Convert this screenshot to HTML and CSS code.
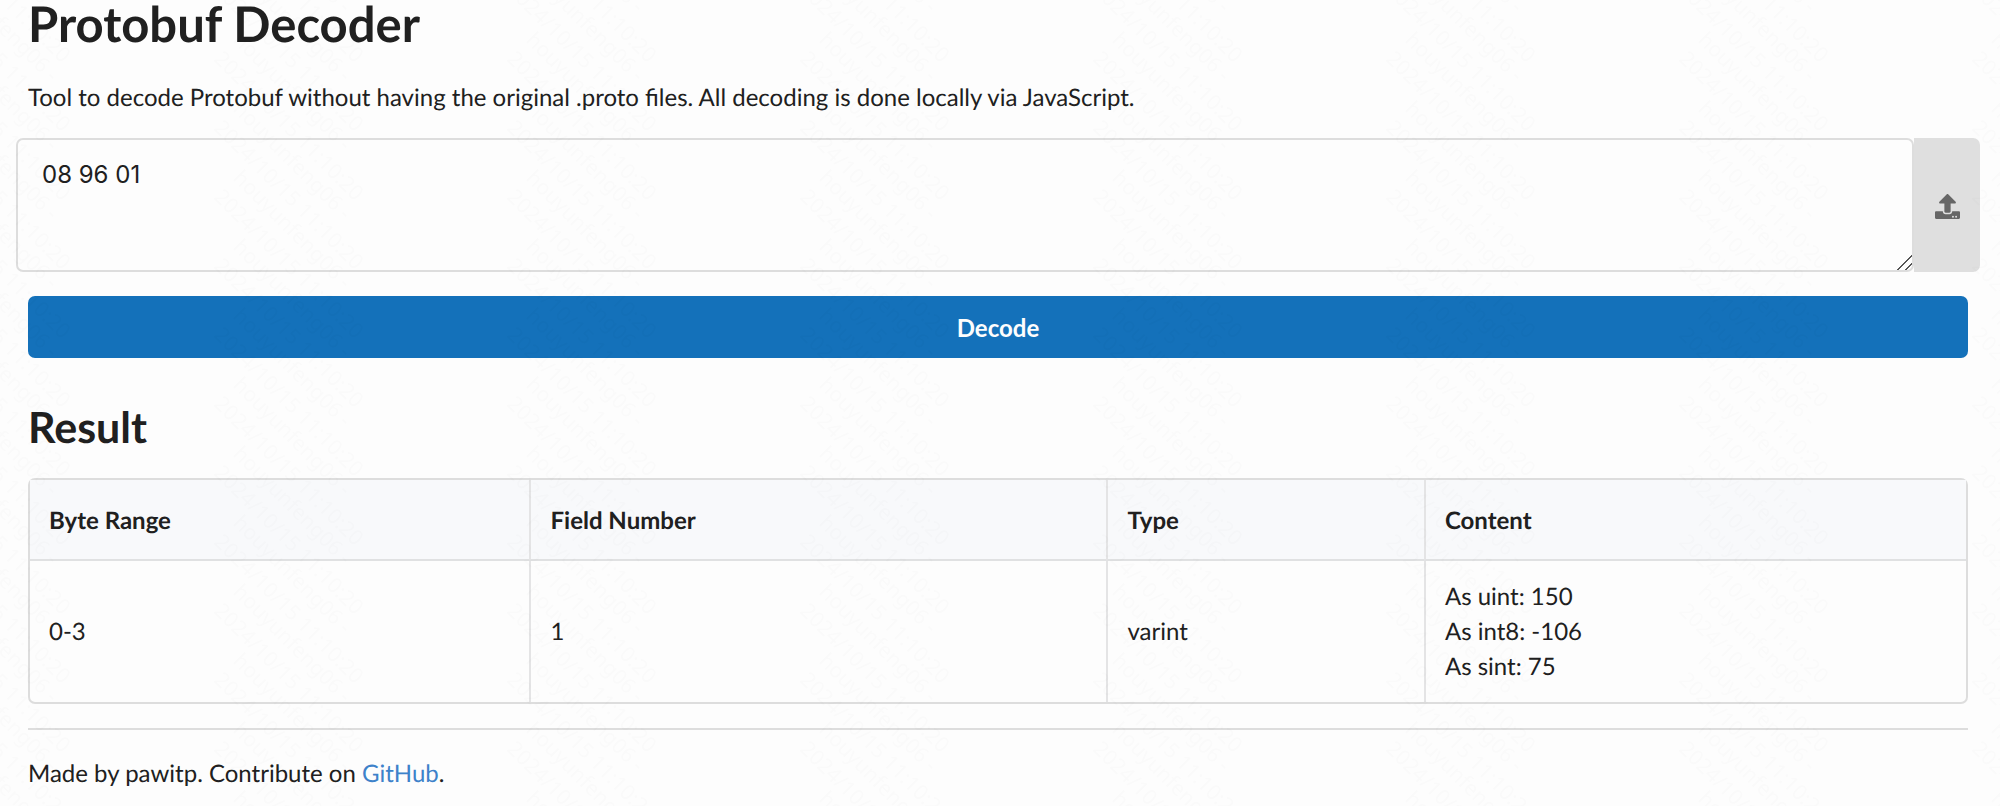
FILE: index.html
```html
<!DOCTYPE html>
<html lang="en">
<head>
<meta charset="utf-8">
<title>Protobuf Decoder</title>
<link rel="stylesheet" href="styles.css">
</head>
<body>
<main class="container">
  <h1 class="title">Protobuf Decoder</h1>
  <p class="intro">Tool to decode Protobuf without having the original .proto files. All decoding is done locally via JavaScript.</p>
  <form class="form">
    <div class="input-row">
      <textarea class="input" aria-label="Protobuf bytes">08 96 01</textarea>
      <button class="upload" type="button" aria-label="Upload file">
        <svg class="upload-icon" viewBox="0 0 512 512" aria-hidden="true"><path fill="currentColor" d="M296 384h-80c-13 0-24-11-24-24V192h-88c-18 0-27-21-14-34L242 6c8-7 20-7 28 0l152 152c13 13 4 34-14 34h-88v168c0 13-11 24-24 24zm216-8v112c0 13-11 24-24 24H24c-13 0-24-11-24-24V376c0-13 11-24 24-24h136v8c0 31 25 56 56 56h80c31 0 56-25 56-56v-8h136c13 0 24 11 24 24zM388 464a20 20 0 1 0-40 0 20 20 0 0 0 40 0zm64 0a20 20 0 1 0-40 0 20 20 0 0 0 40 0z"/></svg>
      </button>
    </div>
    <button class="decode" type="button">Decode</button>
  </form>
  <h2 class="subtitle">Result</h2>
  <table class="result">
    <colgroup><col class="col-range"><col class="col-field"><col class="col-type"><col></colgroup>
    <thead>
      <tr><th scope="col">Byte Range</th><th scope="col">Field Number</th><th scope="col">Type</th><th scope="col">Content</th></tr>
    </thead>
    <tbody>
      <tr><td>0-3</td><td>1</td><td>varint</td><td>As uint: 150<br>As int8: -106<br>As sint: 75</td></tr>
    </tbody>
  </table>
  <hr class="divider">
  <p class="footer">Made by pawitp. Contribute on <a class="link" href="#">GitHub</a>.</p>
</main>
<svg class="watermark" aria-hidden="true">
  <defs>
    <g id="mark">
      <text transform="translate(27 44) rotate(45)">houyunfeng06 -</text>
      <text transform="translate(8 63) rotate(45)">2024/10/15 11:10:20</text>
    </g>
    <pattern id="marks" x="205" y="-3" width="293" height="69" patternUnits="userSpaceOnUse">
      <use href="#mark"/>
      <use href="#mark" y="-69"/>
      <use href="#mark" y="-138"/>
      <use href="#mark" y="-207"/>
    </pattern>
  </defs>
  <rect width="100%" height="100%" fill="url(#marks)"/>
</svg>
</body>
</html>
```
FILE: styles.css
```css
* { box-sizing: border-box; }
body {
  margin: 0;
  background: #fdfdfd;
  color: #202020;
  font: 24px/35px Lato, sans-serif;
  text-rendering: geometricPrecision;
}
.container { padding: 0 32px 0 28px; }
.title { margin: 0 0 32px; font-size: 49px; line-height: 48px; }
.intro { margin: 0 0 23px; }
.input-row { display: flex; margin: 0 -12px 24px; }
.input {
  flex: 1;
  min-width: 0;
  height: 134px;
  padding: 18px 24px;
  border: 2px solid #dddddd;
  border-radius: 7px;
  outline: 0;
  background: #fdfdfd;
  color: #202020;
  font: 24px/34px Inter, sans-serif;
  resize: vertical;
}
.input::-webkit-resizer {
  background: linear-gradient(135deg, transparent 48%, #555555 48% 54%, transparent 54% 76%, #555555 76% 82%, transparent 82%);
}
.upload {
  display: flex;
  align-items: center;
  justify-content: center;
  width: 66px;
  padding: 2px 0 0;
  border: 0;
  border-radius: 0 7px 7px 0;
  background: #dfdfdf;
  color: #666666;
}
.upload-icon { width: 25px; height: 25px; }
.decode {
  display: block;
  width: 100%;
  padding: 15px 24px 13px;
  border: 0;
  border-radius: 7px;
  background: #1471ba;
  color: #fdfdfd;
  font: bold 24px/34px Lato, sans-serif;
}
.subtitle { margin: 43px 0 24px; font-size: 43px; line-height: 53px; }
.result {
  width: 100%;
  border: 2px solid #dddddd;
  border-radius: 7px;
  border-spacing: 0;
  table-layout: fixed;
}
.col-range { width: 25.8%; }
.col-field { width: 29.8%; }
.col-type { width: 16.4%; }
.result th, .result td { padding: 18px 19px; text-align: left; }
.result th { padding: 23px 19px 21px; background: #f8f9fb; border-bottom: 2px solid #e0e1e2; }
.result th + th, .result td + td { border-left: 2px solid #e4e4e5; }
.divider { margin: 24px 0 26px; border: 0; border-top: 2px solid #dddddd; }
.footer { margin: 0; }
.link { color: #3d82ca; text-decoration: none; }
.watermark {
  position: fixed;
  inset: 0;
  width: 100%;
  height: 100%;
  pointer-events: none;
  opacity: 0.011;
  font: 21px "Noto Sans", sans-serif;
}
```
